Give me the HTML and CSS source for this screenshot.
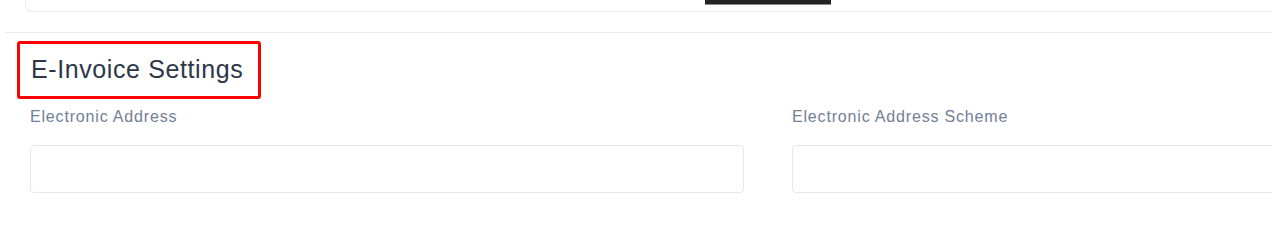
FILE: index.html
```html
<!DOCTYPE html>
<html lang="en">
<head>
<meta charset="utf-8">
<title>E-Invoice Settings</title>
<link rel="stylesheet" href="styles.css">
</head>
<body>
<div class="page">
  <div class="top-card"></div>
  <div class="popover-edge"></div>
  <section class="section">
    <h2 class="section-title">E-Invoice Settings</h2>
    <div class="fields">
      <div class="field">
        <label class="field-label" for="ea">Electronic Address</label>
        <input class="field-input" id="ea" type="text">
      </div>
      <div class="field">
        <label class="field-label" for="eas">Electronic Address Scheme</label>
        <input class="field-input" id="eas" type="text">
      </div>
    </div>
  </section>
</div>
</body>
</html>
```

FILE: styles.css
```css
* {
  box-sizing: border-box;
}

html, body {
  margin: 0;
  padding: 0;
  background: #ffffff;
}

body {
  width: 1272px;
  height: 238px;
  overflow: hidden;
  font-family: "Liberation Sans", Arial, sans-serif;
}

.page {
  position: relative;
  width: 1600px;
}

.top-card {
  height: 12px;
  margin-left: 25px;
  border: 1px solid #e6e9ef;
  border-top: none;
  border-radius: 0 0 6px 6px;
  background: #ffffff;
}

.popover-edge {
  position: absolute;
  left: 705px;
  top: 0;
  width: 126px;
  height: 5px;
  background: #232323;
  border-bottom: 1px solid #8a8a8a;
}

.section {
  margin-top: 20px;
  margin-left: 5px;
  border-top: 1px solid #e6eaf1;
  padding-top: 8px;
}

.section-title {
  display: inline-block;
  margin: 0 0 0 12px;
  width: 244px;
  height: 58px;
  padding: 0 0 0 11px;
  border: 3px solid #ff0000;
  border-radius: 3px;
  font-size: 25px;
  font-weight: 400;
  letter-spacing: 0.6px;
  line-height: 50px;
  color: #2d3748;
}

.fields {
  display: grid;
  grid-template-columns: 714px 714px;
  column-gap: 48px;
  margin-top: 6px;
  margin-left: 25px;
}

.field {
  display: flex;
  flex-direction: column;
  gap: 16px;
}

.field-label {
  font-size: 16px;
  line-height: 24px;
  letter-spacing: 0.82px;
  color: #718096;
}

.field-input {
  height: 48px;
  border: 1px solid #e4e8ee;
  border-radius: 4px;
  background: #ffffff;
  font: inherit;
  outline: none;
}
```
